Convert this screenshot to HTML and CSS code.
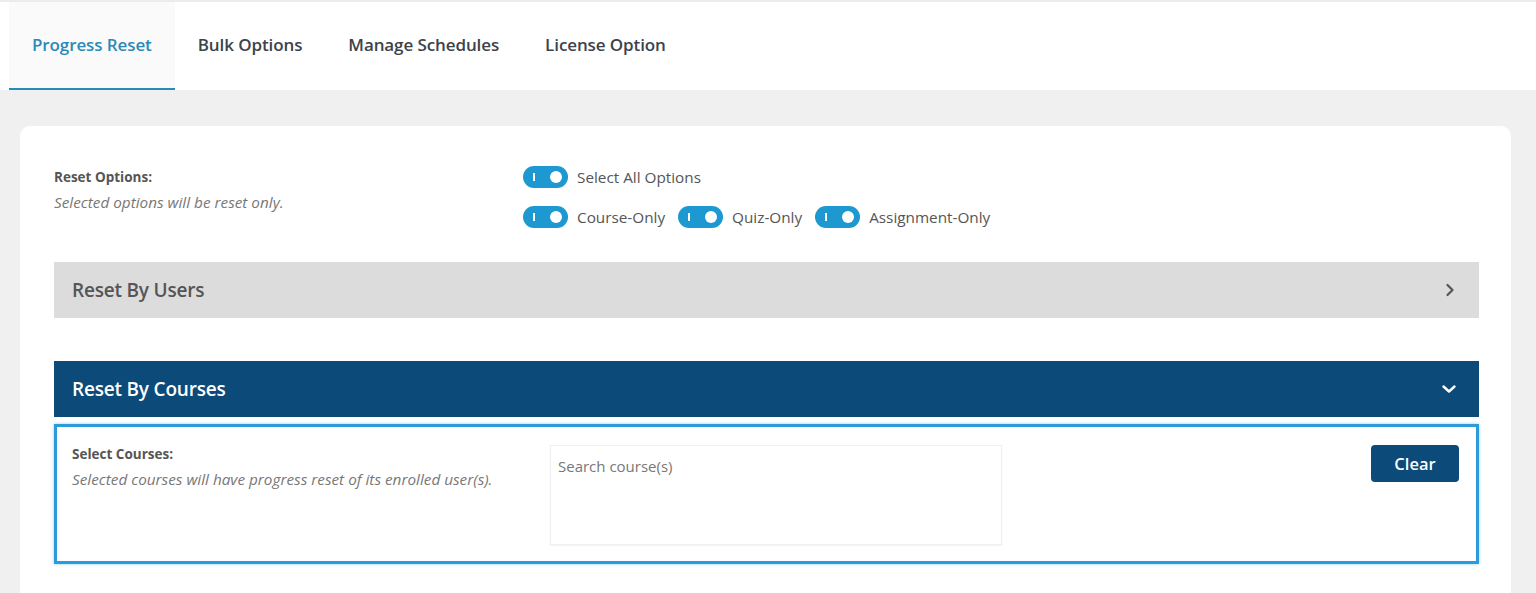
FILE: index.html
```html
<!DOCTYPE html>
<html lang="en">
<head>
  <meta charset="UTF-8">
  <title>Progress Reset</title>
  <link rel="stylesheet" href="styles.css">
</head>
<body>
  <nav class="tabs">
    <a class="tab active">Progress Reset</a>
    <a class="tab">Bulk Options</a>
    <a class="tab">Manage Schedules</a>
    <a class="tab">License Option</a>
  </nav>

  <div class="card">
    <div class="options">
      <div class="field-info">
        <div class="field-label">Reset Options:</div>
        <div class="field-desc">Selected options will be reset only.</div>
      </div>
      <div class="toggles">
        <div class="toggle-row">
          <label class="toggle"><span class="switch"></span>Select All Options</label>
        </div>
        <div class="toggle-row">
          <label class="toggle"><span class="switch"></span>Course-Only</label>
          <label class="toggle"><span class="switch"></span>Quiz-Only</label>
          <label class="toggle"><span class="switch"></span>Assignment-Only</label>
        </div>
      </div>
    </div>

    <div class="section-head closed">
      <span>Reset By Users</span>
      <svg width="14" height="14" viewBox="0 0 14 14"><path d="M4.5 2l5 5-5 5" fill="none" stroke="#555" stroke-width="2.2" stroke-linecap="round" stroke-linejoin="round"/></svg>
    </div>

    <div class="section-head open">
      <span>Reset By Courses</span>
      <svg width="16" height="14" viewBox="0 0 16 14"><path d="M2.5 4.5l5.5 5 5.5-5" fill="none" stroke="#fff" stroke-width="2.4" stroke-linecap="round" stroke-linejoin="round"/></svg>
    </div>

    <div class="section-body">
      <div class="field-info wide">
        <div class="field-label">Select Courses:</div>
        <div class="field-desc">Selected courses will have progress reset of its enrolled user(s).</div>
      </div>
      <div class="search-box">Search course(s)</div>
      <button class="btn-clear">Clear</button>
    </div>
  </div>
</body>
</html>
```

FILE: styles.css
```css
:root {
  --bg: #f0f0f0;
  --card: #ffffff;
  --text: #3c434a;
  --muted: #555555;
  --italic: #777777;
  --accent: #2b8ab8;
  --toggle: #1e98d0;
  --navy: #0b4a79;
  --sky: #2c9bdc;
}

body {
  margin: 0;
  background-color: var(--bg);
  font-family: "Open Sans", "Noto Sans", sans-serif;
  color: var(--text);
}

.tabs {
  display: flex;
  background-color: #fff;
  height: 88px;
  padding-left: 9px;
  border-top: 2px solid #ececec;
}

.tab {
  padding: 0 23px;
  line-height: 86px;
  font-size: 17px;
  font-weight: 600;
  color: #3c434a;
  letter-spacing: -0.1px;
  border-bottom: 2px solid transparent;
}

.tab.active {
  color: var(--accent);
  background-color: #fafafa;
  border-bottom-color: var(--accent);
}

.card {
  background-color: var(--card);
  border-radius: 10px;
  margin: 36px 25px 0 20px;
  padding: 40px 32px 40px 34px;
}

.options {
  display: flex;
}

.field-info {
  width: 469px;
  padding-top: 2px;
}

.field-label {
  font-size: 13.5px;
  font-weight: 700;
  color: var(--muted);
  line-height: 18px;
}

.field-desc {
  font-size: 15.3px;
  font-style: italic;
  color: var(--italic);
  line-height: 20px;
  margin-top: 6px;
}

.toggles {
  display: flex;
  flex-direction: column;
  gap: 18px;
}

.toggle-row {
  display: flex;
  gap: 13px;
}

.toggle {
  display: flex;
  align-items: center;
  gap: 9px;
  font-size: 15.3px;
  color: var(--muted);
}

.switch {
  position: relative;
  width: 45px;
  height: 22px;
  border-radius: 11px;
  background-color: var(--toggle);
}

.switch::before {
  content: "";
  position: absolute;
  left: 10px;
  top: 7px;
  width: 2px;
  height: 8px;
  background-color: #fff;
}

.switch::after {
  content: "";
  position: absolute;
  right: 6px;
  top: 5px;
  width: 12px;
  height: 12px;
  border-radius: 50%;
  background-color: #fff;
}

.section-head {
  display: flex;
  align-items: center;
  justify-content: space-between;
  height: 56px;
  padding: 0 22px 0 18px;
  font-size: 19px;
  font-weight: 600;
  letter-spacing: -0.2px;
}

.section-head.closed {
  background-color: #dcdcdc;
  color: var(--muted);
  margin-top: 34px;
}

.section-head.open {
  background-color: var(--navy);
  color: #fff;
  margin-top: 43px;
}

.section-body {
  display: flex;
  align-items: flex-start;
  margin-top: 7px;
  border: 3px solid var(--sky);
  box-shadow: 0 0 3px rgba(44, 155, 220, 0.5);
  padding: 18px 17px 16px 15px;
}

.field-info.wide {
  width: 478px;
  padding-top: 0;
}

.search-box {
  width: 443px;
  height: 88px;
  padding: 10px 0 0 7px;
  border: 1px solid #f0f0f0;
  box-shadow: 0 1px 2px rgba(0, 0, 0, 0.05);
  font-size: 15px;
  color: #777;
}

.btn-clear {
  margin-left: auto;
  width: 88px;
  height: 37px;
  border: none;
  border-radius: 4px;
  background-color: var(--navy);
  color: #fff;
  font-family: inherit;
  font-size: 16.5px;
  font-weight: 600;
}
```
